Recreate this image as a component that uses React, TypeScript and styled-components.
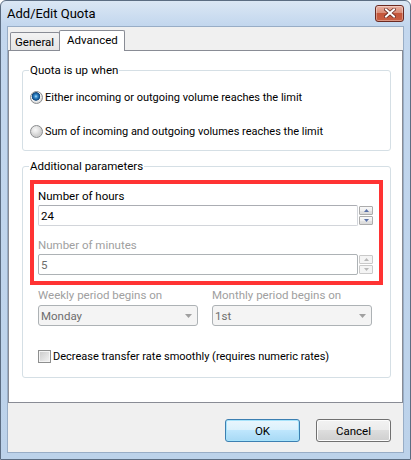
import styled, { createGlobalStyle } from 'styled-components';

const GlobalStyle = createGlobalStyle`
  html, body {
    margin: 0;
    padding: 0;
    background: #ffffff;
  }
  body {
    font-family: Roboto, 'Noto Sans', sans-serif;
    font-size: 11px;
    color: #000;
  }
  * {
    box-sizing: border-box;
  }
`;

const Window = styled.div`
  width: 411px;
  height: 460px;
  display: flex;
  flex-direction: column;
  padding: 0 6px 6px;
  border: 1px solid #5c6d82;
  border-radius: 6px 6px 0 0;
  background: linear-gradient(#dbe7f4 0, #c3d7ee 24px, #bcd2ea 100%);
`;

const TitleBar = styled.div`
  height: 25px;
  display: flex;
  align-items: center;
  justify-content: space-between;
`;

const Title = styled.span`
  font-size: 13px;
  color: #000;
`;

const CloseButton = styled.div`
  width: 29px;
  height: 17px;
  margin-top: -1px;
  display: flex;
  align-items: center;
  justify-content: center;
  border: 1px solid #6b2a22;
  border-radius: 3px;
  background: linear-gradient(#eab0a2 0, #d98d78 45%, #c4553a 50%, #c95e42 100%);
  box-shadow: inset 0 0 0 1px rgba(255, 255, 255, 0.35);
`;

const Client = styled.div`
  flex: 1;
  display: flex;
  flex-direction: column;
  padding-top: 3px;
  border: 1px solid #98adc6;
  background: #f0f0f0;
`;

const TabStrip = styled.div`
  height: 20px;
  display: flex;
  align-items: flex-end;
  padding-left: 2px;
`;

const Tab = styled.div<{ $active?: boolean }>`
  position: relative;
  z-index: ${(p) => (p.$active ? 1 : 0)};
  height: ${(p) => (p.$active ? '21px' : '18px')};
  margin-bottom: ${(p) => (p.$active ? '-1px' : '0')};
  margin-left: ${(p) => (p.$active ? '-1px' : '0')};
  padding: ${(p) => (p.$active ? '1px 6px 0 7px' : '1px 5px 0 4px')};
  border: 1px solid #898c95;
  border-bottom: none;
  border-radius: 2px 2px 0 0;
  background: ${(p) => (p.$active ? '#ffffff' : 'linear-gradient(#f3f3f3, #e5e5e5)')};
  font-size: 11.5px;
  line-height: 16px;
`;

const Panel = styled.div`
  height: 353px;
  display: flex;
  flex-direction: column;
  gap: 8px;
  padding: 12px 11px 0 13px;
  border: 1px solid #898c95;
  background: #ffffff;
`;

const GroupBox = styled.fieldset<{ $pad: string }>`
  margin: 0;
  min-width: 0;
  padding: ${(p) => p.$pad};
  border: 1px solid #d5dfe5;
  border-radius: 3px;
`;

const Legend = styled.legend`
  margin-left: -1px;
  padding: 0 1px;
  font-size: 11.5px;
  line-height: 15px;
`;

const RadioList = styled.div`
  display: flex;
  flex-direction: column;
  gap: 19px;
`;

const OptionRow = styled.div`
  display: flex;
  align-items: center;
  gap: 2px;
  font-size: 11px;
  line-height: 15px;
`;

const Radio = styled.span<{ $checked?: boolean }>`
  width: 13px;
  height: 13px;
  flex: none;
  border: 1px solid #8a8c8e;
  border-radius: 50%;
  background: ${(p) =>
    p.$checked
      ? 'radial-gradient(circle at 45% 40%, #b6e3fb 0, #3a8fd0 1.5px, #13528f 3.5px, #1e4f7d 4px, #f2f2f2 4.6px, #dcdcdc 6px)'
      : 'radial-gradient(circle at 40% 35%, #f8f8f8 0, #e6e6e6 3px, #cfcfcf 6px)'};
`;

const Checkbox = styled.span`
  width: 13px;
  height: 13px;
  flex: none;
  border: 1px solid #8e8f8f;
  box-shadow: inset 0 0 0 1px #f4f4f4;
  background: linear-gradient(135deg, #c9c9c9, #f4f4f4);
`;

const Highlight = styled.div`
  display: flex;
  flex-direction: column;
  gap: 12px;
  padding: 5px 6px 6px 4px;
  border: 4px solid #ff3333;
`;

const Field = styled.div`
  display: flex;
  flex-direction: column;
  gap: 1px;
`;

const FieldLabel = styled.span<{ $disabled?: boolean }>`
  font-size: 11.5px;
  line-height: 15px;
  color: ${(p) => (p.$disabled ? '#a0a0a0' : '#000')};
`;

const SpinRow = styled.div`
  display: flex;
  align-items: center;
`;

const Edit = styled.div<{ $disabled?: boolean }>`
  flex: 1;
  height: 21px;
  display: flex;
  align-items: center;
  padding-left: 2px;
  border: 1px solid ${(p) => (p.$disabled ? '#adb2b5' : '#d2d5da')};
  border-top-color: ${(p) => (p.$disabled ? '#adb2b5' : '#abadb3')};
  border-radius: 2px;
  background: #ffffff;
  font-size: 11.5px;
  color: ${(p) => (p.$disabled ? '#6d6d6d' : '#000')};
`;

const SpinButtons = styled.div`
  width: 15px;
  display: flex;
  flex-direction: column;
  gap: 1px;
  padding-left: 1px;
`;

const SpinButton = styled.div<{ $disabled?: boolean }>`
  height: 9px;
  display: flex;
  align-items: center;
  justify-content: center;
  border: 1px solid ${(p) => (p.$disabled ? '#c9c9c9' : '#acacac')};
  border-radius: 1px;
  background: ${(p) =>
    p.$disabled
      ? '#f4f4f4'
      : 'linear-gradient(#f8f8f8, #efefef 50%, #e4e4e4 50%, #dadada)'};
`;

const Periods = styled.div`
  display: grid;
  grid-template-columns: 160px 160px;
  column-gap: 14px;
  padding: 3px 0 0 8px;
`;

const PeriodField = styled.div`
  display: flex;
  flex-direction: column;
  gap: 2px;
`;

const Combo = styled.div`
  height: 21px;
  display: flex;
  align-items: center;
  justify-content: space-between;
  padding: 0 5px 0 2px;
  border: 1px solid #adb2b5;
  border-radius: 3px;
  background: #f4f4f4;
  font-size: 11.5px;
  color: #6d6d6d;
`;

const CheckRow = styled(OptionRow)`
  margin: 23px 0 0 8px;
`;

const Footer = styled.div`
  flex: 1;
  display: flex;
  justify-content: flex-end;
  align-items: flex-start;
  gap: 16px;
  padding: 16px 12px 0 0;
`;

const Button = styled.div<{ $default?: boolean }>`
  width: 75px;
  height: 23px;
  display: flex;
  align-items: center;
  justify-content: center;
  border: 1px solid ${(p) => (p.$default ? '#3c7fb1' : '#707070')};
  border-radius: 3px;
  background: ${(p) =>
    p.$default
      ? 'linear-gradient(#eaf6fd, #d9f0fc 50%, #bee6fd 50%, #a7d9f5)'
      : 'linear-gradient(#f2f2f2, #ebebeb 50%, #dddddd 50%, #cfcfcf)'};
  box-shadow: inset 0 0 0 1px ${(p) => (p.$default ? '#a6e3fb' : '#fcfcfc')};
  font-size: 11.5px;
`;

function CloseGlyph() {
  return (
    <svg width="12" height="10" viewBox="0 0 12 10">
      <path d="M2 1.5 L10 8.5 M10 1.5 L2 8.5" stroke="#6b2a22" strokeWidth="3.6" strokeLinecap="square" />
      <path d="M2 1.5 L10 8.5 M10 1.5 L2 8.5" stroke="#ffffff" strokeWidth="2" strokeLinecap="square" />
    </svg>
  );
}

function Arrow({ up, color, w = 7, h = 4 }: { up?: boolean; color: string; w?: number; h?: number }) {
  return (
    <svg width={w} height={h} viewBox={`0 0 ${w} ${h}`}>
      <path d={up ? `M0 ${h} L${w / 2} 0 L${w} ${h} Z` : `M0 0 L${w} 0 L${w / 2} ${h} Z`} fill={color} />
    </svg>
  );
}

function Spinner({ value, disabled }: { value: string; disabled?: boolean }) {
  const color = disabled ? '#b8b8b8' : '#5870a8';
  return (
    <SpinRow>
      <Edit $disabled={disabled}>{value}</Edit>
      <SpinButtons>
        <SpinButton $disabled={disabled}>
          <Arrow up color={color} w={5} h={3} />
        </SpinButton>
        <SpinButton $disabled={disabled}>
          <Arrow color={color} w={5} h={3} />
        </SpinButton>
      </SpinButtons>
    </SpinRow>
  );
}

export default function App() {
  return (
    <>
      <GlobalStyle />
      <Window>
        <TitleBar>
          <Title>Add/Edit Quota</Title>
          <CloseButton>
            <CloseGlyph />
          </CloseButton>
        </TitleBar>
        <Client>
          <TabStrip>
            <Tab>General</Tab>
            <Tab $active>Advanced</Tab>
          </TabStrip>
          <Panel>
            <GroupBox $pad="12px 7px 11px">
              <Legend>Quota is up when</Legend>
              <RadioList>
                <OptionRow>
                  <Radio $checked />
                  Either incoming or outgoing volume reaches the limit
                </OptionRow>
                <OptionRow>
                  <Radio />
                  Sum of incoming and outgoing volumes reaches the limit
                </OptionRow>
              </RadioList>
            </GroupBox>
            <GroupBox $pad="6px 7px 13px">
              <Legend>Additional parameters</Legend>
              <Highlight>
                <Field>
                  <FieldLabel>Number of hours</FieldLabel>
                  <Spinner value="24" />
                </Field>
                <Field>
                  <FieldLabel $disabled>Number of minutes</FieldLabel>
                  <Spinner value="5" disabled />
                </Field>
              </Highlight>
              <Periods>
                <PeriodField>
                  <FieldLabel $disabled>Weekly period begins on</FieldLabel>
                  <Combo>
                    Monday
                    <Arrow color="#a0a0a0" />
                  </Combo>
                </PeriodField>
                <PeriodField>
                  <FieldLabel $disabled>Monthly period begins on</FieldLabel>
                  <Combo>
                    1st
                    <Arrow color="#a0a0a0" />
                  </Combo>
                </PeriodField>
              </Periods>
              <CheckRow>
                <Checkbox />
                Decrease transfer rate smoothly (requires numeric rates)
              </CheckRow>
            </GroupBox>
          </Panel>
          <Footer>
            <Button $default>OK</Button>
            <Button>Cancel</Button>
          </Footer>
        </Client>
      </Window>
    </>
  );
}
